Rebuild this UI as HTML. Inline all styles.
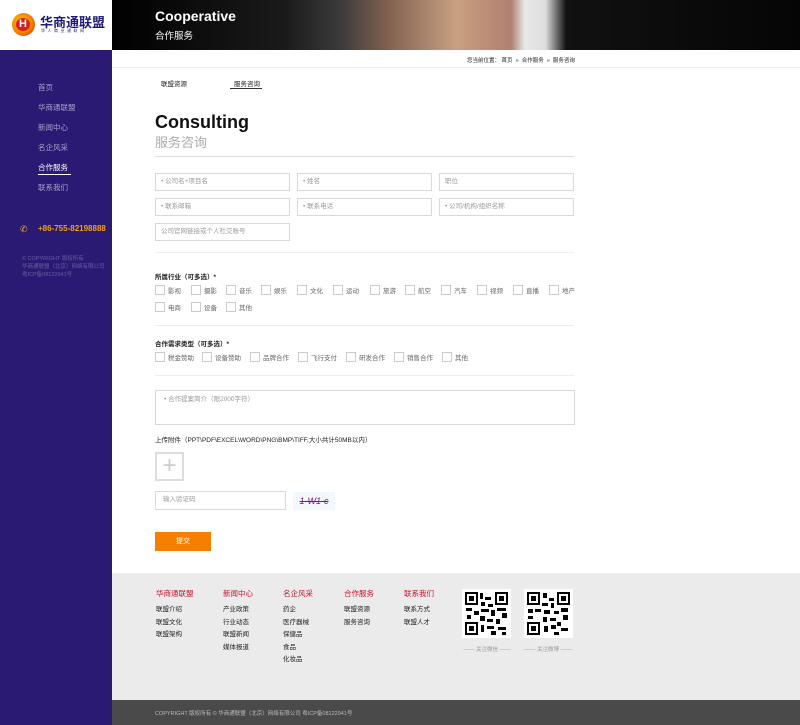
<!DOCTYPE html>
<html><head><meta charset="utf-8"><style>
*{margin:0;padding:0;box-sizing:border-box}
body{width:800px;height:725px;position:relative;overflow:hidden;background:#fff;font-family:"Liberation Sans","Noto Sans CJK SC",sans-serif;font-size:7px;color:#333}
.a{position:absolute;white-space:nowrap}
.side{left:0;top:0;width:112px;height:725px;background:#2a1a73}
.logo{left:0;top:0;width:112px;height:50px;background:#fff}
.nav{left:38px;color:#a9a3cc;font-size:7.5px}
.inp{position:absolute;border:1px solid #d9d9d9;height:18px;color:#999;font-size:6.5px;line-height:16px;padding-left:5px}
.cb{position:absolute;width:10px;height:10px;border:1px solid #ccc}
.cl{position:absolute;font-size:6.5px;color:#666}
.hr{position:absolute;left:155px;width:419px;height:1px;background:#eee}
.fh{position:absolute;color:#c8102e;font-size:7.5px;top:588px}
.fi{position:absolute;color:#222;font-size:6.5px}
</style></head><body>
<div class="a side"></div>
<div class="a logo">
 <div class="a" style="left:12px;top:13px;width:23px;height:23px;border-radius:50%;background:radial-gradient(circle at 40% 40%,#ffcc00,#f08000 55%,#d02010)"></div>
 <div class="a" style="left:16px;top:18px;width:14px;height:13px;border-radius:50%;background:#d81e1e;color:#fff;font-weight:bold;font-size:11px;line-height:13px;text-align:center">H</div>
 <div class="a" style="left:40px;top:12px;color:#1e1a7a;font-size:13px;font-weight:bold">华商通联盟</div>
 <div class="a" style="left:41px;top:28px;color:#1e1a7a;font-size:4px;letter-spacing:2.5px">华人商业通联网</div>
</div>
<div class="a" style="left:112px;top:0;width:688px;height:50px;background:linear-gradient(90deg,#000 0%,#1a1a1a 25%,#3a3a3a 33%,#806050 40%,#c9a080 50%,#b08070 58%,#e8e8e8 60%,#ddd 63%,#111 66%,#050505 100%)"></div>
<div class="a" style="left:155px;top:8px;color:#fff;font-size:14px;font-weight:bold">Cooperative</div>
<div class="a" style="left:155px;top:28px;color:#fff;font-size:9.5px">合作服务</div>
<div class="a" style="left:467px;top:56px;font-size:5.5px;color:#222">您当前位置： 首页 &nbsp;» &nbsp;合作服务 &nbsp;» &nbsp;服务咨询</div>
<div class="a" style="left:112px;top:67px;width:688px;height:1px;background:#eee"></div>

<div class="a nav" style="top:82px">首页</div>
<div class="a nav" style="top:102px">华商通联盟</div>
<div class="a nav" style="top:122px">新闻中心</div>
<div class="a nav" style="top:142px">名企风采</div>
<div class="a nav" style="top:162px;color:#fff">合作服务</div>
<div class="a" style="left:38px;top:174px;width:33px;height:1px;background:#fff"></div>
<div class="a nav" style="top:182px">联系我们</div>
<div class="a" style="left:20px;top:224px;color:#f5b800;font-size:9px">✆</div>
<div class="a" style="left:38px;top:224px;color:#f5a000;font-size:8px;font-weight:bold">+86-755-82198888</div>
<div class="a" style="left:22px;top:255px;color:#6a5fa0;font-size:5.5px;line-height:8px">© COPYRIGHT 版权所有<br>华商通联盟（北京）网络有限公司<br>粤ICP备08122941号</div>

<div class="a" style="left:161px;top:78px;font-size:6.5px;color:#222">联盟资源</div>
<div class="a" style="left:234px;top:78px;font-size:6.5px;color:#222">服务咨询</div>
<div class="a" style="left:230px;top:88px;width:32px;height:1px;background:#333"></div>

<div class="a" style="left:155px;top:112px;font-size:18px;font-weight:bold;color:#111">Consulting</div>
<div class="a" style="left:155px;top:132px;font-size:13px;color:#aaa">服务咨询</div>
<div class="hr" style="top:156px;background:#ddd"></div>

<div class="inp" style="left:155px;top:173px;width:135px">• 公司名+项目名</div>
<div class="inp" style="left:297px;top:173px;width:135px">• 姓名</div>
<div class="inp" style="left:439px;top:173px;width:135px">职位</div>
<div class="inp" style="left:155px;top:198px;width:135px">• 联系邮箱</div>
<div class="inp" style="left:297px;top:198px;width:135px">• 联系电话</div>
<div class="inp" style="left:439px;top:198px;width:135px">• 公司/机构/组织名称</div>
<div class="inp" style="left:155px;top:223px;width:135px">公司官网链接或个人社交账号</div>
<div class="hr" style="top:252px"></div>

<div class="a" style="left:155px;top:271px;font-size:6.5px;color:#222;font-weight:bold">所属行业（可多选）*</div>
<div class="cb" style="left:155px;top:285px"></div><div class="cl" style="left:168px;top:285px">影视</div>
<div class="cb" style="left:191px;top:285px"></div><div class="cl" style="left:204px;top:285px">摄影</div>
<div class="cb" style="left:226px;top:285px"></div><div class="cl" style="left:239px;top:285px">音乐</div>
<div class="cb" style="left:261px;top:285px"></div><div class="cl" style="left:274px;top:285px">娱乐</div>
<div class="cb" style="left:297px;top:285px"></div><div class="cl" style="left:310px;top:285px">文化</div>
<div class="cb" style="left:333px;top:285px"></div><div class="cl" style="left:346px;top:285px">运动</div>
<div class="cb" style="left:370px;top:285px"></div><div class="cl" style="left:383px;top:285px">旅游</div>
<div class="cb" style="left:405px;top:285px"></div><div class="cl" style="left:418px;top:285px">航空</div>
<div class="cb" style="left:441px;top:285px"></div><div class="cl" style="left:454px;top:285px">汽车</div>
<div class="cb" style="left:477px;top:285px"></div><div class="cl" style="left:490px;top:285px">视频</div>
<div class="cb" style="left:513px;top:285px"></div><div class="cl" style="left:526px;top:285px">直播</div>
<div class="cb" style="left:549px;top:285px"></div><div class="cl" style="left:562px;top:285px">地产</div>
<div class="cb" style="left:155px;top:302px"></div><div class="cl" style="left:168px;top:302px">电商</div>
<div class="cb" style="left:191px;top:302px"></div><div class="cl" style="left:204px;top:302px">设备</div>
<div class="cb" style="left:226px;top:302px"></div><div class="cl" style="left:239px;top:302px">其他</div>
<div class="hr" style="top:325px"></div>

<div class="a" style="left:155px;top:338px;font-size:6.5px;color:#222;font-weight:bold">合作需求类型（可多选）*</div>
<div class="cb" style="left:155px;top:352px"></div><div class="cl" style="left:168px;top:352px">税金赞助</div>
<div class="cb" style="left:202px;top:352px"></div><div class="cl" style="left:215px;top:352px">设备赞助</div>
<div class="cb" style="left:250px;top:352px"></div><div class="cl" style="left:263px;top:352px">品牌合作</div>
<div class="cb" style="left:298px;top:352px"></div><div class="cl" style="left:311px;top:352px">飞行支付</div>
<div class="cb" style="left:346px;top:352px"></div><div class="cl" style="left:359px;top:352px">研发合作</div>
<div class="cb" style="left:394px;top:352px"></div><div class="cl" style="left:407px;top:352px">销售合作</div>
<div class="cb" style="left:442px;top:352px"></div><div class="cl" style="left:455px;top:352px">其他</div>
<div class="hr" style="top:375px"></div>

<div class="inp" style="left:155px;top:390px;width:420px;height:35px;line-height:18px;padding-left:8px">• 合作提案简介（限2000字符）</div>
<div class="a" style="left:155px;top:434px;font-size:6.5px;color:#222">上传附件（PPT\PDF\EXCEL\WORD\PNG\BMP\TIFF,大小共计50MB以内）</div>
<div class="a" style="left:155px;top:452px;width:29px;height:29px;border:2px solid #ddd;color:#ccc;font-size:24px;line-height:23px;text-align:center;font-weight:300">+</div>
<div class="inp" style="left:155px;top:491px;width:131px;height:19px;padding-left:7px">输入验证码</div>
<div class="a" style="left:293px;top:492px;width:42px;height:18px;background:#f2f8fc;color:#7a1a8a;font-size:9px;text-decoration:line-through;line-height:18px;text-align:center;font-style:italic">1-W1-c</div>
<div class="a" style="left:155px;top:532px;width:56px;height:19px;background:#f77f00;color:#fff;font-size:7px;line-height:19px;text-align:center">提交</div>

<div class="a" style="left:112px;top:573px;width:688px;height:127px;background:#ebebeb"></div>
<div class="fh" style="left:156px">华商通联盟</div>
<div class="fi" style="left:156px;top:603px">联盟介绍</div><div class="fi" style="left:156px;top:616px">联盟文化</div><div class="fi" style="left:156px;top:628px">联盟架构</div>
<div class="fh" style="left:223px">新闻中心</div>
<div class="fi" style="left:223px;top:603px">产业政策</div><div class="fi" style="left:223px;top:616px">行业动态</div><div class="fi" style="left:223px;top:628px">联盟新闻</div><div class="fi" style="left:223px;top:641px">媒体报道</div>
<div class="fh" style="left:283px">名企风采</div>
<div class="fi" style="left:283px;top:603px">药企</div><div class="fi" style="left:283px;top:616px">医疗器械</div><div class="fi" style="left:283px;top:628px">保健品</div><div class="fi" style="left:283px;top:641px">食品</div><div class="fi" style="left:283px;top:653px">化妆品</div>
<div class="fh" style="left:344px">合作服务</div>
<div class="fi" style="left:344px;top:603px">联盟资源</div><div class="fi" style="left:344px;top:616px">服务咨询</div>
<div class="fh" style="left:404px">联系我们</div>
<div class="fi" style="left:404px;top:603px">联系方式</div><div class="fi" style="left:404px;top:616px">联盟人才</div>

<svg class="a" style="left:462px;top:589px" width="49" height="49" viewBox="0 0 49 49"><rect width="49" height="49" fill="#fff"/><g fill="#000"><rect x="3" y="3" width="13" height="13"/><rect x="33" y="3" width="13" height="13"/><rect x="3" y="33" width="13" height="13"/></g><g fill="#fff"><rect x="5" y="5" width="9" height="9"/><rect x="35" y="5" width="9" height="9"/><rect x="5" y="35" width="9" height="9"/></g><g fill="#000"><rect x="7" y="7" width="5" height="5"/><rect x="37" y="7" width="5" height="5"/><rect x="7" y="37" width="5" height="5"/><rect x="18" y="4" width="3" height="6"/><rect x="23" y="8" width="6" height="3"/><rect x="19" y="13" width="4" height="4"/><rect x="26" y="15" width="5" height="3"/><rect x="4" y="19" width="6" height="3"/><rect x="12" y="22" width="5" height="4"/><rect x="19" y="20" width="8" height="3"/><rect x="29" y="21" width="4" height="6"/><rect x="35" y="19" width="9" height="3"/><rect x="40" y="24" width="5" height="5"/><rect x="18" y="27" width="5" height="5"/><rect x="25" y="30" width="6" height="3"/><rect x="34" y="30" width="4" height="5"/><rect x="19" y="36" width="3" height="7"/><rect x="25" y="37" width="7" height="3"/><rect x="36" y="38" width="8" height="3"/><rect x="29" y="42" width="5" height="4"/><rect x="40" y="43" width="4" height="3"/><rect x="5" y="26" width="4" height="4"/></g></svg>
<svg class="a" style="left:524px;top:589px" width="49" height="49" viewBox="0 0 49 49"><rect width="49" height="49" fill="#fff"/><g fill="#000"><rect x="3" y="3" width="13" height="13"/><rect x="33" y="3" width="13" height="13"/><rect x="3" y="33" width="13" height="13"/></g><g fill="#fff"><rect x="5" y="5" width="9" height="9"/><rect x="35" y="5" width="9" height="9"/><rect x="5" y="35" width="9" height="9"/></g><g fill="#000"><rect x="7" y="7" width="5" height="5"/><rect x="37" y="7" width="5" height="5"/><rect x="7" y="37" width="5" height="5"/><rect x="19" y="4" width="4" height="5"/><rect x="25" y="9" width="5" height="3"/><rect x="18" y="14" width="6" height="3"/><rect x="27" y="14" width="3" height="5"/><rect x="4" y="20" width="5" height="4"/><rect x="11" y="20" width="6" height="3"/><rect x="20" y="21" width="6" height="4"/><rect x="30" y="22" width="5" height="3"/><rect x="37" y="19" width="7" height="4"/><rect x="39" y="26" width="5" height="5"/><rect x="19" y="28" width="4" height="5"/><rect x="26" y="29" width="6" height="3"/><rect x="33" y="33" width="4" height="4"/><rect x="20" y="37" width="4" height="6"/><rect x="27" y="36" width="5" height="4"/><rect x="37" y="39" width="7" height="3"/><rect x="30" y="43" width="5" height="3"/><rect x="4" y="27" width="5" height="3"/></g></svg>
<div class="a" style="left:463px;top:645px;width:48px;text-align:center;font-size:5.5px;color:#999">—— 关注微信 ——</div>
<div class="a" style="left:524px;top:645px;width:48px;text-align:center;font-size:5.5px;color:#999">—— 关注微博 ——</div>

<div class="a" style="left:112px;top:700px;width:688px;height:25px;background:#4a4a4a"></div>
<div class="a" style="left:155px;top:709px;font-size:5.5px;color:#bbb">COPYRIGHT 版权所有 © 华商通联盟（北京）网络有限公司 粤ICP备08122941号</div>
</body></html>
